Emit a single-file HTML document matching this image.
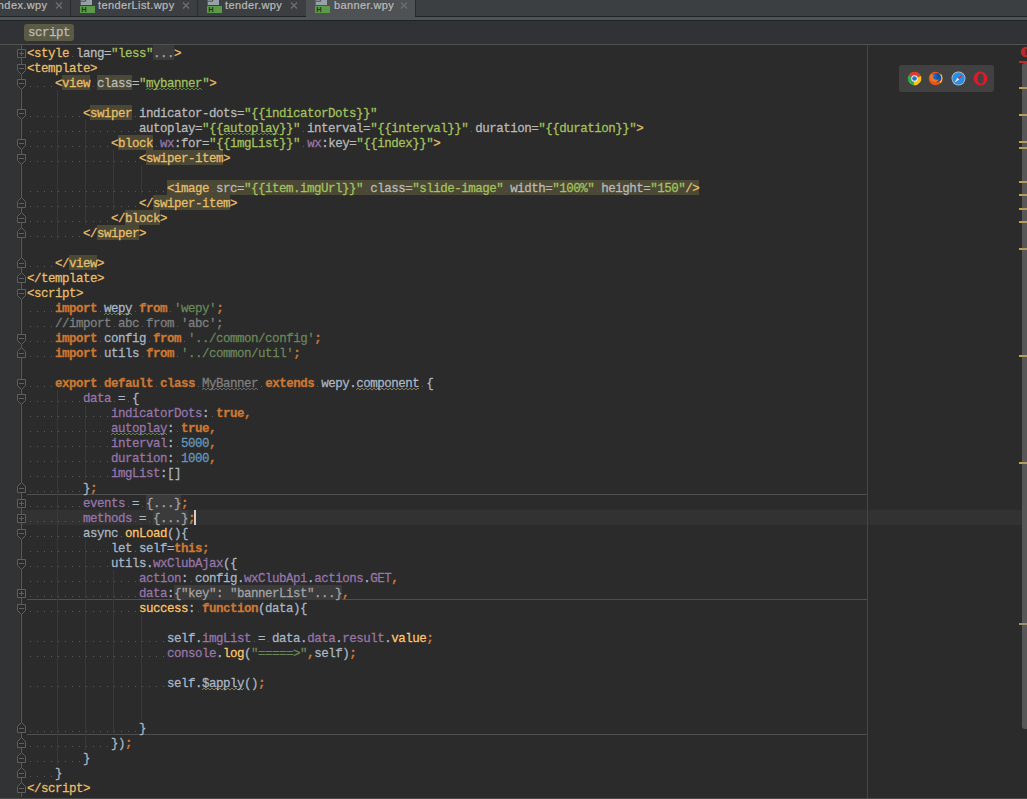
<!DOCTYPE html>
<html><head><meta charset="utf-8">
<style>
html,body{margin:0;padding:0;}
body{width:1027px;height:799px;overflow:hidden;background:#2b2b2b;position:relative;font-family:"Liberation Sans",sans-serif;}
#tabs{position:absolute;left:0;top:0;width:1027px;height:16px;background:#3c3f41;}
#tabs .tab{position:absolute;top:0;height:16px;color:#bbbbbb;font-size:11px;line-height:12px;letter-spacing:0.4px;-webkit-text-stroke:0.2px currentColor;}
#tabs .tab .tx{position:absolute;top:0;white-space:nowrap;}
#tabs .sep{position:absolute;top:0;width:1px;height:16px;background:#2b2b2b;}
#tabbot{position:absolute;left:0;top:16px;width:1027px;height:1px;background:#222324;}
#strip{position:absolute;left:0;top:17px;width:1027px;height:3px;background:#4d5457;}
#strip2{position:absolute;left:0;top:20px;width:1027px;height:1px;background:#212224;}
#active{position:absolute;left:306px;top:0;width:109px;height:17px;background:#4e5254;}
.x{position:absolute;top:1px;width:8px;height:9px;}
.fi{position:absolute;top:0;width:16px;height:13px;}
#crumb{position:absolute;left:0;top:21px;width:1027px;height:23px;background:#303236;}
#chip{position:absolute;left:24px;top:24px;width:50px;height:17px;background:#5b5a45;border-radius:3px;}
#chip span{position:absolute;left:4px;top:0.5px;font-family:"Liberation Mono",monospace;font-size:12.5px;letter-spacing:-0.5px;line-height:17px;color:#bbbbbb;-webkit-text-stroke:0.25px currentColor;}
#crumbline{position:absolute;left:0;top:44px;width:1027px;height:1px;background:#515151;}
#gutter{position:absolute;left:0;top:45px;width:20px;height:753px;background:#313335;}
#editor{position:absolute;left:20px;top:45px;width:1007px;height:753px;background:#2b2b2b;}
#curline{position:absolute;left:20px;top:510px;width:1002px;height:15px;background:#323232;}
#margin{position:absolute;left:867px;top:45px;width:1px;height:753px;background:#464646;}
.msep{position:absolute;left:27px;width:840px;height:1px;background:#4f4f4f;}
.guide{position:absolute;width:1px;background:#393939;}
#code{position:absolute;left:27px;top:45px;font-family:"Liberation Mono",monospace;font-size:12.5px;letter-spacing:-0.5px;}
.ln{position:absolute;left:0;height:15px;line-height:15px;white-space:pre;padding-top:2px;-webkit-text-stroke:0.25px currentColor;transform:scaleY(1.06);transform-origin:0 13.8px;}

.w{color:transparent;-webkit-text-stroke:0;}
.dots{position:absolute;height:1px;background:repeating-linear-gradient(to right,transparent 0 3px,#5a5a5a 3px 4px,transparent 4px 7px);}
.t{color:#e8bf6a;}
.a{color:#bababa;}
.v{color:#a5c25c;}
.ns{color:#9876aa;}
.k{color:#cc7832;font-weight:bold;}
.d{color:#a9b7c6;}
.s{color:#6a8759;}
.c{color:#808080;}
.n{color:#6897bb;}
.f{color:#9876aa;}
.fn{color:#ffc66d;}
.bhl{position:absolute;height:15px;background:#4b4936;}
.fold{color:#a4a4a4;}
.bfold{position:absolute;height:15px;background:#3b3b3b;}
.wave{position:absolute;height:2px;background:repeating-linear-gradient(to right,transparent 0 1px,#5b8048 1px 3px,transparent 3px 4px) 0 0/100% 1px no-repeat,repeating-linear-gradient(to right,#5b8048 0 1px,transparent 1px 3px,#5b8048 3px 4px) 0 1px/100% 1px no-repeat;}
.wave.beige{background:repeating-linear-gradient(to right,transparent 0 1px,#867c5a 1px 3px,transparent 3px 4px) 0 0/100% 1px no-repeat,repeating-linear-gradient(to right,#867c5a 0 1px,transparent 1px 3px,#867c5a 3px 4px) 0 1px/100% 1px no-repeat;}
.wave.gray{background:repeating-linear-gradient(to right,transparent 0 1px,#6a6a6a 1px 3px,transparent 3px 4px) 0 0/100% 1px no-repeat,repeating-linear-gradient(to right,#6a6a6a 0 1px,transparent 1px 3px,#6a6a6a 3px 4px) 0 1px/100% 1px no-repeat;}
#caret{position:absolute;left:194px;top:510px;width:2px;height:15px;background:#cfcfcf;}
#folds{position:absolute;left:0;top:0;}
#bottom{position:absolute;left:0;top:798px;width:1027px;height:1px;background:#4a4a4a;}
#browsers{position:absolute;left:899px;top:65px;width:95px;height:27px;background:#414141;border-radius:3px;}
.bi{position:absolute;top:6px;width:15px;height:15px;}
#thumb{position:absolute;left:1022px;top:63px;width:5px;height:666px;background:#575757;border-radius:3px 0 0 3px;}
.mark{position:absolute;left:1019px;width:8px;height:2px;background:linear-gradient(to right,#cfa22f 0 3px,#b09c62 3px);}
</style></head><body>
<div id="tabs">
  <div class="tab" style="left:0;width:71px"><span class="tx" style="left:-5px;top:-1.5px">index.wpy</span>
    <svg class="x" style="left:55px" viewBox="0 0 8 9"><path d="M1 1.5l6 6M7 1.5l-6 6" stroke="#6e6e6e" stroke-width="1.3"/></svg></div>
  <div class="sep" style="left:70px"></div>
  <div class="tab" style="left:72px;width:125px">
    <svg class="fi" style="left:8px" viewBox="0 0 16 13"><path d="M0.7 0h11.3v5h-11.3z" fill="#98a1a8"/><path d="M0.7 1.2h5v-1.2" stroke="#4a4d50" stroke-width="1" fill="none"/><rect x="0" y="6" width="15" height="7" fill="#5a9a48"/><text x="1.2" y="12.4" font-family="Liberation Sans" font-size="7.5" font-weight="bold" fill="#263624">H</text></svg>
    <span class="tx" style="left:26px;top:-1.5px">tenderList.wpy</span>
    <svg class="x" style="left:110px" viewBox="0 0 8 9"><path d="M1 1.5l6 6M7 1.5l-6 6" stroke="#6e6e6e" stroke-width="1.3"/></svg></div>
  <div class="sep" style="left:197px"></div>
  <div class="tab" style="left:198px;width:108px">
    <svg class="fi" style="left:9px" viewBox="0 0 16 13"><path d="M0.7 0h11.3v5h-11.3z" fill="#98a1a8"/><path d="M0.7 1.2h5v-1.2" stroke="#4a4d50" stroke-width="1" fill="none"/><rect x="0" y="6" width="15" height="7" fill="#5a9a48"/><text x="1.2" y="12.4" font-family="Liberation Sans" font-size="7.5" font-weight="bold" fill="#263624">H</text></svg>
    <span class="tx" style="left:27px;top:-1.5px">tender.wpy</span>
    <svg class="x" style="left:92px" viewBox="0 0 8 9"><path d="M1 1.5l6 6M7 1.5l-6 6" stroke="#6e6e6e" stroke-width="1.3"/></svg></div>
  <div class="sep" style="left:306px"></div>
  <div class="sep" style="left:415px;background:#28292b"></div>
</div>
<div id="tabbot"></div>
<div id="strip"></div>
<div id="active">
    <svg class="fi" style="left:9px" viewBox="0 0 16 13"><path d="M0.7 0h11.3v5h-11.3z" fill="#98a1a8"/><path d="M0.7 1.2h5v-1.2" stroke="#4a4d50" stroke-width="1" fill="none"/><rect x="0" y="6" width="15" height="7" fill="#5a9a48"/><text x="1.2" y="12.4" font-family="Liberation Sans" font-size="7.5" font-weight="bold" fill="#263624">H</text></svg>
    <span class="tx" style="position:absolute;left:28px;top:-1.5px;color:#bbbbbb;font-size:11px;letter-spacing:0.4px;-webkit-text-stroke:0.2px currentColor;line-height:12px;white-space:nowrap">banner.wpy</span>
    <svg class="x" style="left:94px" viewBox="0 0 8 9"><path d="M1 1.5l6 6M7 1.5l-6 6" stroke="#6e6e6e" stroke-width="1.3"/></svg>
</div>
<div id="strip2"></div>
<div id="crumb"></div>
<div id="chip"><span>script</span></div>
<div id="crumbline"></div>
<div id="gutter"></div>
<div id="editor"></div>
<div id="curline"></div>
<div id="margin"></div>
<div class="msep" style="top:494px"></div>
<div class="msep" style="top:599px"></div>
<div class="msep" style="top:734px"></div>
<div class="guide" style="left:57px;top:90px;height:150px"></div><div class="guide" style="left:85px;top:120px;height:105px"></div><div class="guide" style="left:113px;top:150px;height:60px"></div><div class="guide" style="left:141px;top:165px;height:30px"></div><div class="guide" style="left:57px;top:390px;height:375px"></div><div class="guide" style="left:85px;top:405px;height:75px"></div><div class="guide" style="left:85px;top:540px;height:210px"></div><div class="guide" style="left:113px;top:570px;height:165px"></div><div class="guide" style="left:141px;top:615px;height:105px"></div>
<div class="bfold" style="left:153px;top:45px;width:21px"></div><div class="bhl" style="left:62px;top:75px;width:28px"></div><div class="bhl" style="left:97px;top:75px;width:35px"></div><div class="bhl" style="left:90px;top:105px;width:42px"></div><div class="bhl" style="left:118px;top:135px;width:35px"></div><div class="bhl" style="left:146px;top:150px;width:77px"></div><div class="bhl" style="left:167px;top:180px;width:42px"></div><div class="bhl" style="left:209px;top:180px;width:154px"></div><div class="bhl" style="left:363px;top:180px;width:140px"></div><div class="bhl" style="left:503px;top:180px;width:91px"></div><div class="bhl" style="left:594px;top:180px;width:105px"></div><div class="bhl" style="left:153px;top:195px;width:77px"></div><div class="bhl" style="left:125px;top:210px;width:35px"></div><div class="bhl" style="left:97px;top:225px;width:42px"></div><div class="bhl" style="left:69px;top:255px;width:28px"></div><div class="bfold" style="left:146px;top:495px;width:35px"></div><div class="bfold" style="left:153px;top:510px;width:35px"></div><div class="bfold" style="left:174px;top:585px;width:168px"></div>
<div class="dots" style="left:69px;top:56px;width:7px"></div><div class="dots" style="left:27px;top:86px;width:28px"></div><div class="dots" style="left:90px;top:86px;width:7px"></div><div class="dots" style="left:27px;top:116px;width:56px"></div><div class="dots" style="left:132px;top:116px;width:7px"></div><div class="dots" style="left:27px;top:131px;width:112px"></div><div class="dots" style="left:300px;top:131px;width:7px"></div><div class="dots" style="left:468px;top:131px;width:7px"></div><div class="dots" style="left:27px;top:146px;width:84px"></div><div class="dots" style="left:153px;top:146px;width:7px"></div><div class="dots" style="left:300px;top:146px;width:7px"></div><div class="dots" style="left:27px;top:161px;width:112px"></div><div class="dots" style="left:27px;top:191px;width:140px"></div><div class="dots" style="left:209px;top:191px;width:7px"></div><div class="dots" style="left:363px;top:191px;width:7px"></div><div class="dots" style="left:503px;top:191px;width:7px"></div><div class="dots" style="left:594px;top:191px;width:7px"></div><div class="dots" style="left:27px;top:206px;width:112px"></div><div class="dots" style="left:27px;top:221px;width:84px"></div><div class="dots" style="left:27px;top:236px;width:56px"></div><div class="dots" style="left:27px;top:266px;width:28px"></div><div class="dots" style="left:27px;top:311px;width:28px"></div><div class="dots" style="left:97px;top:311px;width:7px"></div><div class="dots" style="left:132px;top:311px;width:7px"></div><div class="dots" style="left:167px;top:311px;width:7px"></div><div class="dots" style="left:27px;top:326px;width:28px"></div><div class="dots" style="left:111px;top:326px;width:7px"></div><div class="dots" style="left:139px;top:326px;width:7px"></div><div class="dots" style="left:174px;top:326px;width:7px"></div><div class="dots" style="left:27px;top:341px;width:28px"></div><div class="dots" style="left:97px;top:341px;width:7px"></div><div class="dots" style="left:146px;top:341px;width:7px"></div><div class="dots" style="left:181px;top:341px;width:7px"></div><div class="dots" style="left:27px;top:356px;width:28px"></div><div class="dots" style="left:97px;top:356px;width:7px"></div><div class="dots" style="left:139px;top:356px;width:7px"></div><div class="dots" style="left:174px;top:356px;width:7px"></div><div class="dots" style="left:27px;top:386px;width:28px"></div><div class="dots" style="left:97px;top:386px;width:7px"></div><div class="dots" style="left:153px;top:386px;width:7px"></div><div class="dots" style="left:195px;top:386px;width:7px"></div><div class="dots" style="left:258px;top:386px;width:7px"></div><div class="dots" style="left:314px;top:386px;width:7px"></div><div class="dots" style="left:419px;top:386px;width:7px"></div><div class="dots" style="left:27px;top:401px;width:56px"></div><div class="dots" style="left:111px;top:401px;width:7px"></div><div class="dots" style="left:125px;top:401px;width:7px"></div><div class="dots" style="left:27px;top:416px;width:84px"></div><div class="dots" style="left:209px;top:416px;width:7px"></div><div class="dots" style="left:27px;top:431px;width:84px"></div><div class="dots" style="left:174px;top:431px;width:7px"></div><div class="dots" style="left:27px;top:446px;width:84px"></div><div class="dots" style="left:174px;top:446px;width:7px"></div><div class="dots" style="left:27px;top:461px;width:84px"></div><div class="dots" style="left:174px;top:461px;width:7px"></div><div class="dots" style="left:27px;top:476px;width:84px"></div><div class="dots" style="left:27px;top:491px;width:56px"></div><div class="dots" style="left:27px;top:506px;width:56px"></div><div class="dots" style="left:125px;top:506px;width:7px"></div><div class="dots" style="left:139px;top:506px;width:7px"></div><div class="dots" style="left:27px;top:521px;width:56px"></div><div class="dots" style="left:132px;top:521px;width:7px"></div><div class="dots" style="left:146px;top:521px;width:7px"></div><div class="dots" style="left:27px;top:536px;width:56px"></div><div class="dots" style="left:118px;top:536px;width:7px"></div><div class="dots" style="left:27px;top:551px;width:84px"></div><div class="dots" style="left:132px;top:551px;width:7px"></div><div class="dots" style="left:27px;top:566px;width:84px"></div><div class="dots" style="left:27px;top:581px;width:112px"></div><div class="dots" style="left:188px;top:581px;width:7px"></div><div class="dots" style="left:27px;top:596px;width:112px"></div><div class="dots" style="left:27px;top:611px;width:112px"></div><div class="dots" style="left:195px;top:611px;width:7px"></div><div class="dots" style="left:27px;top:641px;width:140px"></div><div class="dots" style="left:251px;top:641px;width:7px"></div><div class="dots" style="left:265px;top:641px;width:7px"></div><div class="dots" style="left:27px;top:656px;width:140px"></div><div class="dots" style="left:27px;top:686px;width:140px"></div><div class="dots" style="left:27px;top:731px;width:112px"></div><div class="dots" style="left:27px;top:746px;width:84px"></div><div class="dots" style="left:27px;top:761px;width:56px"></div><div class="dots" style="left:27px;top:776px;width:28px"></div><div class="wave" style="left:146px;top:88px;width:56px"></div><div class="wave" style="left:223px;top:133px;width:56px"></div><div class="wave" style="left:104px;top:313px;width:28px"></div><div class="wave gray" style="left:202px;top:388px;width:56px"></div><div class="wave beige" style="left:356px;top:388px;width:63px"></div><div class="wave" style="left:111px;top:433px;width:56px"></div><div class="wave beige" style="left:202px;top:688px;width:42px"></div>
<svg id="folds" width="1027" height="799" style="position:absolute;left:0;top:0">
  <path d="M21.5 45V797" stroke="#5a5a5a" stroke-width="1" fill="none"/>
  <g stroke="#5f5f5f" stroke-width="1" fill="#2b2b2b"><path d="M17.5 49.5h8v8h-8z M19 53.5h5 M21.5 51v5" /><path d="M17.5 64.5h8v6l-4 4l-4 -4z M19 68.5h5" /><path d="M17.5 79.5h8v6l-4 4l-4 -4z M19 83.5h5" /><path d="M17.5 109.5h8v6l-4 4l-4 -4z M19 113.5h5" /><path d="M17.5 139.5h8v6l-4 4l-4 -4z M19 143.5h5" /><path d="M17.5 154.5h8v6l-4 4l-4 -4z M19 158.5h5" /><path d="M17.5 207.5h8v-6l-4 -4l-4 4z M19 203.5h5" /><path d="M17.5 222.5h8v-6l-4 -4l-4 4z M19 218.5h5" /><path d="M17.5 237.5h8v-6l-4 -4l-4 4z M19 233.5h5" /><path d="M17.5 267.5h8v-6l-4 -4l-4 4z M19 263.5h5" /><path d="M17.5 282.5h8v-6l-4 -4l-4 4z M19 278.5h5" /><path d="M17.5 289.5h8v6l-4 4l-4 -4z M19 293.5h5" /><path d="M17.5 334.5h8v6l-4 4l-4 -4z M19 338.5h5" /><path d="M17.5 357.5h8v-6l-4 -4l-4 4z M19 353.5h5" /><path d="M17.5 379.5h8v6l-4 4l-4 -4z M19 383.5h5" /><path d="M17.5 394.5h8v6l-4 4l-4 -4z M19 398.5h5" /><path d="M17.5 492.5h8v-6l-4 -4l-4 4z M19 488.5h5" /><path d="M17.5 499.5h8v8h-8z M19 503.5h5 M21.5 501v5" /><path d="M17.5 514.5h8v8h-8z M19 518.5h5 M21.5 516v5" /><path d="M17.5 529.5h8v6l-4 4l-4 -4z M19 533.5h5" /><path d="M17.5 559.5h8v6l-4 4l-4 -4z M19 563.5h5" /><path d="M17.5 589.5h8v8h-8z M19 593.5h5 M21.5 591v5" /><path d="M17.5 604.5h8v6l-4 4l-4 -4z M19 608.5h5" /><path d="M17.5 732.5h8v-6l-4 -4l-4 4z M19 728.5h5" /><path d="M17.5 747.5h8v-6l-4 -4l-4 4z M19 743.5h5" /><path d="M17.5 762.5h8v-6l-4 -4l-4 4z M19 758.5h5" /><path d="M17.5 777.5h8v-6l-4 -4l-4 4z M19 773.5h5" /><path d="M17.5 792.5h8v-6l-4 -4l-4 4z M19 788.5h5" /></g>
</svg>
<div id="code">
<div class="ln" style="top:0px"><span class="t">&lt;style</span><span class="w">.</span><span class="a">lang</span><span class="a">=</span><span class="v">&quot;less&quot;</span><span class="fold">...</span><span class="t">&gt;</span></div>
<div class="ln" style="top:15px"><span class="t">&lt;template&gt;</span></div>
<div class="ln" style="top:30px"><span class="w">....</span><span class="t">&lt;</span><span class="t hl">view</span><span class="w">.</span><span class="a hl">class</span><span class="a">=</span><span class="v">&quot;</span><span class="v typo">mybanner</span><span class="v">&quot;</span><span class="t">&gt;</span></div>
<div class="ln" style="top:45px"></div>
<div class="ln" style="top:60px"><span class="w">........</span><span class="t">&lt;</span><span class="t hl">swiper</span><span class="w">.</span><span class="a">indicator-dots=</span><span class="v">&quot;{{indicatorDots}}&quot;</span></div>
<div class="ln" style="top:75px"><span class="w">................</span><span class="a">autoplay=</span><span class="v">&quot;{{</span><span class="v typo">autoplay</span><span class="v">}}&quot;</span><span class="w">.</span><span class="a">interval=</span><span class="v">&quot;{{interval}}&quot;</span><span class="w">.</span><span class="a">duration=</span><span class="v">&quot;{{duration}}&quot;</span><span class="t">&gt;</span></div>
<div class="ln" style="top:90px"><span class="w">............</span><span class="t">&lt;</span><span class="t hl">block</span><span class="w">.</span><span class="ns">wx</span><span class="a">:for=</span><span class="v">&quot;{{imgList}}&quot;</span><span class="w">.</span><span class="ns">wx</span><span class="a">:key=</span><span class="v">&quot;{{index}}&quot;</span><span class="t">&gt;</span></div>
<div class="ln" style="top:105px"><span class="w">................</span><span class="t">&lt;</span><span class="t hl">swiper-item</span><span class="t">&gt;</span></div>
<div class="ln" style="top:120px"></div>
<div class="ln" style="top:135px"><span class="w">....................</span><span class="t hl">&lt;image</span><span class="w hl">.</span><span class="a hl">src=</span><span class="v hl">&quot;{{item.imgUrl}}&quot;</span><span class="w hl">.</span><span class="a hl">class=</span><span class="v hl">&quot;slide-image&quot;</span><span class="w hl">.</span><span class="a hl">width=</span><span class="v hl">&quot;100%&quot;</span><span class="w hl">.</span><span class="a hl">height=</span><span class="v hl">&quot;150&quot;</span><span class="t hl">/&gt;</span></div>
<div class="ln" style="top:150px"><span class="w">................</span><span class="t">&lt;/</span><span class="t hl">swiper-item</span><span class="t">&gt;</span></div>
<div class="ln" style="top:165px"><span class="w">............</span><span class="t">&lt;/</span><span class="t hl">block</span><span class="t">&gt;</span></div>
<div class="ln" style="top:180px"><span class="w">........</span><span class="t">&lt;/</span><span class="t hl">swiper</span><span class="t">&gt;</span></div>
<div class="ln" style="top:195px"></div>
<div class="ln" style="top:210px"><span class="w">....</span><span class="t">&lt;/</span><span class="t hl">view</span><span class="t">&gt;</span></div>
<div class="ln" style="top:225px"><span class="t">&lt;/template&gt;</span></div>
<div class="ln" style="top:240px"><span class="t">&lt;script&gt;</span></div>
<div class="ln" style="top:255px"><span class="w">....</span><span class="k">import</span><span class="w">.</span><span class="d typo">wepy</span><span class="w">.</span><span class="k">from</span><span class="w">.</span><span class="s">&#x27;wepy&#x27;</span><span class="k">;</span></div>
<div class="ln" style="top:270px"><span class="w">....</span><span class="c">//import</span><span class="w">.</span><span class="c">abc</span><span class="w">.</span><span class="c">from</span><span class="w">.</span><span class="c">&#x27;abc&#x27;;</span></div>
<div class="ln" style="top:285px"><span class="w">....</span><span class="k">import</span><span class="w">.</span><span class="d">config</span><span class="w">.</span><span class="k">from</span><span class="w">.</span><span class="s">&#x27;../common/config&#x27;</span><span class="k">;</span></div>
<div class="ln" style="top:300px"><span class="w">....</span><span class="k">import</span><span class="w">.</span><span class="d">utils</span><span class="w">.</span><span class="k">from</span><span class="w">.</span><span class="s">&#x27;../common/util&#x27;</span><span class="k">;</span></div>
<div class="ln" style="top:315px"></div>
<div class="ln" style="top:330px"><span class="w">....</span><span class="k">export</span><span class="w">.</span><span class="k">default</span><span class="w">.</span><span class="k">class</span><span class="w">.</span><span class="c typo">MyBanner</span><span class="w">.</span><span class="k">extends</span><span class="w">.</span><span class="d">wepy.</span><span class="d typo beige">component</span><span class="w">.</span><span class="d">{</span></div>
<div class="ln" style="top:345px"><span class="w">........</span><span class="f">data</span><span class="w">.</span><span class="d">=</span><span class="w">.</span><span class="d">{</span></div>
<div class="ln" style="top:360px"><span class="w">............</span><span class="f">indicatorDots</span><span class="d">:</span><span class="w">.</span><span class="k">true,</span></div>
<div class="ln" style="top:375px"><span class="w">............</span><span class="f typo">autoplay</span><span class="d">:</span><span class="w">.</span><span class="k">true,</span></div>
<div class="ln" style="top:390px"><span class="w">............</span><span class="f">interval</span><span class="d">:</span><span class="w">.</span><span class="n">5000</span><span class="k">,</span></div>
<div class="ln" style="top:405px"><span class="w">............</span><span class="f">duration</span><span class="d">:</span><span class="w">.</span><span class="n">1000</span><span class="k">,</span></div>
<div class="ln" style="top:420px"><span class="w">............</span><span class="f">imgList</span><span class="d">:[]</span></div>
<div class="ln" style="top:435px"><span class="w">........</span><span class="d">}</span><span class="k">;</span></div>
<div class="ln" style="top:450px"><span class="w">........</span><span class="f">events</span><span class="w">.</span><span class="d">=</span><span class="w">.</span><span class="fold">{...}</span><span class="k">;</span></div>
<div class="ln" style="top:465px"><span class="w">........</span><span class="f">methods</span><span class="w">.</span><span class="d">=</span><span class="w">.</span><span class="fold">{...}</span><span class="k">;</span></div>
<div class="ln" style="top:480px"><span class="w">........</span><span class="d">async</span><span class="w">.</span><span class="fn">onLoad</span><span class="d">(){</span></div>
<div class="ln" style="top:495px"><span class="w">............</span><span class="d">let</span><span class="w">.</span><span class="d">self=</span><span class="k">this;</span></div>
<div class="ln" style="top:510px"><span class="w">............</span><span class="d">utils.</span><span class="f">wxClubAjax</span><span class="d">({</span></div>
<div class="ln" style="top:525px"><span class="w">................</span><span class="f">action</span><span class="d">:</span><span class="w">.</span><span class="d">config.</span><span class="f">wxClubApi</span><span class="d">.</span><span class="f">actions</span><span class="d">.</span><span class="f">GET</span><span class="k">,</span></div>
<div class="ln" style="top:540px"><span class="w">................</span><span class="f">data</span><span class="d">:</span><span class="fold">{&quot;key&quot;: &quot;bannerList&quot;...}</span><span class="k">,</span></div>
<div class="ln" style="top:555px"><span class="w">................</span><span class="fn">success</span><span class="d">:</span><span class="w">.</span><span class="k">function</span><span class="d">(data){</span></div>
<div class="ln" style="top:570px"></div>
<div class="ln" style="top:585px"><span class="w">....................</span><span class="d">self.</span><span class="f">imgList</span><span class="w">.</span><span class="d">=</span><span class="w">.</span><span class="d">data.</span><span class="f">data</span><span class="d">.</span><span class="f">result</span><span class="d">.</span><span class="fn">value</span><span class="k">;</span></div>
<div class="ln" style="top:600px"><span class="w">....................</span><span class="f">console</span><span class="d">.</span><span class="fn">log</span><span class="d">(</span><span class="s">&quot;=====&gt;&quot;</span><span class="k">,</span><span class="d">self)</span><span class="k">;</span></div>
<div class="ln" style="top:615px"></div>
<div class="ln" style="top:630px"><span class="w">....................</span><span class="d">self.</span><span class="d typo beige">$apply</span><span class="d">()</span><span class="k">;</span></div>
<div class="ln" style="top:645px"></div>
<div class="ln" style="top:660px"></div>
<div class="ln" style="top:675px"><span class="w">................</span><span class="d">}</span></div>
<div class="ln" style="top:690px"><span class="w">............</span><span class="d">})</span><span class="k">;</span></div>
<div class="ln" style="top:705px"><span class="w">........</span><span class="d">}</span></div>
<div class="ln" style="top:720px"><span class="w">....</span><span class="d">}</span></div>
<div class="ln" style="top:735px"><span class="t">&lt;/script&gt;</span></div>
</div>
<div id="caret"></div>
<div id="browsers">
  <svg class="bi" style="left:7.5px;top:6px" viewBox="0 0 16 16">
    <path d="M8 8L1.8 4.4A7.2 7.2 0 0 0 7 15.1z" fill="#2fae4a"/>
    <path d="M8 8L7 15.1A7.2 7.2 0 0 0 14.6 5z" fill="#fcc60e"/>
    <path d="M8 8L14.6 5A7.2 7.2 0 0 0 1.8 4.4z" fill="#e23b2e"/>
    <circle cx="8" cy="8" r="3.4" fill="#f4f4f4"/><circle cx="8" cy="8" r="2.5" fill="#2a6fd0"/>
  </svg>
  <svg class="bi" style="left:29px;top:6px" viewBox="0 0 16 16">
    <circle cx="8" cy="8" r="7.2" fill="#e2561d"/>
    <circle cx="9.2" cy="7" r="4.9" fill="#1b62b8"/>
    <path d="M9.2 2.1a4.9 4.9 0 0 1 0 9.8" fill="#0f3f8c" opacity=".5"/>
    <path d="M2.2 4.5c0.8 -1 1.4 -1.3 1.8 -1.6c0 0.8 0.3 1.2 0.7 1.4c0.8 -0.6 1.6 -0.5 2.6 0.3c-1 0.1 -1.8 0.7 -1.8 1.8c0 1.6 1.4 2.9 3.4 2.9c1.4 0 2.1 -0.5 2.5 -0.9c-0.3 1.8 -2 3.4 -4.2 3.4c-2.6 0 -4.8 -1.8 -5 -4.4c-0.1 -1.1 0 -2 0 -2.9z" fill="#ee7422"/>
    <path d="M13.4 3.6a7 7 0 0 1 -0.4 9" stroke="#f7c740" stroke-width="1.4" fill="none"/>
  </svg>
  <svg class="bi" style="left:51.5px;top:6px" viewBox="0 0 16 16">
    <circle cx="8" cy="8" r="7.4" fill="#c9c3b8"/>
    <circle cx="8" cy="8" r="6.6" fill="#2a8de6"/>
    <path d="M12.3 3.6L7 7.2L8.8 9z" fill="#ee2a22"/><path d="M3.5 12.5L7 7.2L8.8 9z" fill="#f2f2f2"/>
  </svg>
  <svg class="bi" style="left:73.5px;top:6px" viewBox="0 0 16 16">
    <ellipse cx="8" cy="8" rx="7.3" ry="7.4" fill="#dd1a2b"/>
    <ellipse cx="8.2" cy="8" rx="3.2" ry="5.3" fill="#414141"/>
  </svg>
</div>
<svg style="position:absolute;left:1016px;top:45px" width="11" height="20" viewBox="0 0 11 20">
  <circle cx="10" cy="7" r="5.2" fill="#b82b2b"/><rect x="9.5" y="4" width="2" height="6" fill="#2b2b2b" opacity=".75"/>
  <rect x="3" y="16" width="8" height="2" fill="#c22b2b"/>
</svg>
<div id="thumb"></div>
<div class="mark" style="top:87px"></div><div class="mark" style="top:114px"></div><div class="mark" style="top:141px"></div><div class="mark" style="top:147px"></div><div class="mark" style="top:181px"></div><div class="mark" style="top:194px"></div><div class="mark" style="top:208px"></div><div class="mark" style="top:221px"></div><div class="mark" style="top:248px"></div><div class="mark" style="top:355px"></div><div class="mark" style="top:462px"></div><div class="mark" style="top:623px;background:#9c9070"></div>
<div id="bottom"></div>
</body></html>
